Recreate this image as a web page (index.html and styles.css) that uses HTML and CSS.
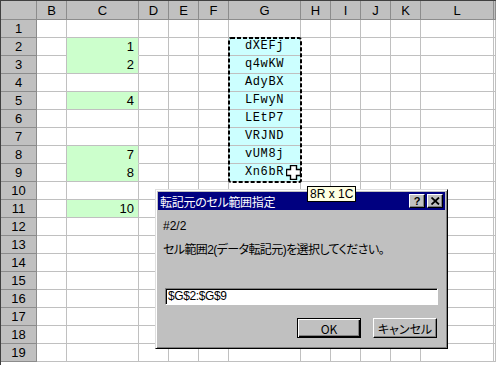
FILE: index.html
```html
<!DOCTYPE html>
<html lang="ja">
<head>
  <meta charset="UTF-8" />
  <meta name="viewport" content="width=device-width, initial-scale=1.0"/>
  <title>転記元のセル範囲指定</title>
  <link rel="stylesheet" href="styles.css">
</head>
<body>
  <div class="sheet">
    <div class="grid" id="grid"></div>

    <svg class="marquee" width="75" height="147" viewBox="0 0 75 147">
      <rect x="1" y="1" width="72" height="144" rx="2" fill="none" stroke="#000" stroke-width="2" stroke-dasharray="4 2"/>
    </svg>

    <svg class="cursor" width="15" height="15" viewBox="0 0 15 15">
      <polygon points="4.5,0.5 10.5,0.5 10.5,4.5 14.5,4.5 14.5,10.5 10.5,10.5 10.5,14.5 4.5,14.5 4.5,10.5 0.5,10.5 0.5,4.5 4.5,4.5" fill="#fff" stroke="#000" stroke-width="1.4"/>
    </svg>

    <div class="dialog">
      <div class="titlebar">
        <span class="title">転記元のセル範囲指定</span>
        <div class="title-buttons">
          <span class="tbtn">?</span>
          <span class="tbtn">
            <svg width="9" height="8" viewBox="0 0 9 8"><path d="M0.5 0.5 L8 7.5 M8 0.5 L0.5 7.5" stroke="#000" stroke-width="1.8"/></svg>
          </span>
        </div>
      </div>
      <div class="dialog-body">
        <p class="step">#2/2</p>
        <p class="prompt">セル範囲2(データ転記元)を選択してください。</p>
        <div class="refbox">$G$2:$G$9</div>
        <div class="actions">
          <button class="btn default">OK</button>
          <button class="btn">キャンセル</button>
        </div>
      </div>
    </div>

    <div class="tip">8R x 1C</div>
  </div>

  <script>
    const cols = ['B', 'C', 'D', 'E', 'F', 'G', 'H', 'I', 'J', 'K', 'L', ''];
    const nums = { 2: '1', 3: '2', 5: '4', 8: '7', 9: '8', 11: '10' };
    const codes = ['dXEFj', 'q4wKW', 'AdyBX', 'LFwyN', 'LEtP7', 'VRJND', 'vUM8j', 'Xn6bR'];

    let html = '<div class="corner"></div>';
    cols.forEach(c => { html += `<div class="colhead">${c}</div>`; });

    for (let r = 1; r <= 19; r++) {
      html += `<div class="rowhead">${r}</div>`;
      cols.forEach(c => {
        if (c === 'C' && nums[r]) {
          const joined = nums[r + 1] ? ' joined' : '';
          html += `<div class="cell num${joined}">${nums[r]}</div>`;
        } else if (c === 'G' && r >= 2 && r <= 9) {
          html += `<div class="cell code">${codes[r - 2]}</div>`;
        } else {
          html += '<div class="cell"></div>';
        }
      });
    }

    document.getElementById('grid').innerHTML = html;
  </script>
</body>
</html>
```

FILE: styles.css
```css
* {
  box-sizing: border-box;
}

body {
  margin: 0;
  background: #fff;
  overflow: hidden;
  font-family: 'Liberation Sans', 'Noto Sans CJK JP', sans-serif;
}

.sheet {
  position: relative;
  width: 496px;
  height: 365px;
  overflow: hidden;
  border-top: 1px solid #404040;
  border-left: 1px solid #404040;
}

.grid {
  display: grid;
  grid-template-columns: 36px 30px 72px 30px 30px 30px 72px 30px 30px 30px 30px 73px 2px;
  grid-template-rows: 19px repeat(19, 18px);
}

.corner,
.colhead,
.rowhead {
  background: #c0c0c0;
  border-right: 1px solid #8c8c8c;
  border-bottom: 1px solid #8c8c8c;
  font-size: 13px;
  color: #000;
  display: flex;
  align-items: center;
  justify-content: center;
}

.cell {
  border-right: 1px solid #c0c0c0;
  border-bottom: 1px solid #c0c0c0;
  font-size: 13px;
  line-height: 17px;
}

.cell.num {
  background: #ccffcc;
  text-align: right;
  padding-right: 4px;
}

.cell.num.joined {
  border-bottom-color: #ccffcc;
}

.cell.code {
  background: #ccffff;
  text-align: center;
  font-family: 'Liberation Mono', monospace;
  font-size: 12px;
  letter-spacing: 0.6px;
}

.marquee {
  position: absolute;
  left: 227px;
  top: 36px;
}

.cursor {
  position: absolute;
  left: 285px;
  top: 164px;
}

.tip {
  position: absolute;
  left: 306px;
  top: 185px;
  height: 16px;
  padding: 0 2px;
  background: #ffffe1;
  border: 1px solid #000;
  font-size: 12px;
  line-height: 14px;
}

/* dialog */

.dialog {
  position: absolute;
  left: 154px;
  top: 188px;
  width: 293px;
  height: 160px;
  padding: 2px;
  background: #c0c0c0;
  border: 1px solid;
  border-color: #dfdfdf #000 #000 #dfdfdf;
  box-shadow: inset 1px 1px #fff, inset -1px -1px #808080;
  font-size: 12px;
}

.titlebar {
  height: 18px;
  background: #000080;
  color: #fff;
  display: flex;
  align-items: center;
  justify-content: space-between;
  padding: 0 2px 0 2px;
}

.title {
  font-family: 'Noto Sans CJK JP', sans-serif;
  font-feature-settings: 'palt';
  font-size: 12px;
  letter-spacing: -0.3px;
}

.title-buttons {
  display: flex;
  gap: 2px;
}

.tbtn {
  width: 16px;
  height: 14px;
  background: #c0c0c0;
  border: 1px solid;
  border-color: #fff #000 #000 #fff;
  box-shadow: inset -1px -1px #808080;
  color: #000;
  font-weight: bold;
  font-size: 11px;
  display: flex;
  align-items: center;
  justify-content: center;
}

.dialog-body {
  padding: 0 8px 0 5px;
}

.step {
  margin: 9px 0 0;
  line-height: 14px;
}

.prompt {
  margin: 10px 0 0;
  line-height: 14px;
  font-feature-settings: 'palt';
  letter-spacing: -0.6px;
}

.refbox {
  margin: 31px 0 0 2px;
  width: 273px;
  height: 17px;
  background: #fff;
  border: 1px solid;
  border-color: #808080 #fff #fff #808080;
  box-shadow: inset 1px 1px #000;
  padding-left: 2px;
  line-height: 15px;
  font-size: 12px;
  letter-spacing: -0.4px;
}

.actions {
  display: flex;
  justify-content: flex-end;
  gap: 12px;
  margin-top: 13px;
}

.btn {
  width: 64px;
  height: 20px;
  padding: 0;
  background: #c0c0c0;
  border: 1px solid;
  border-color: #fff #000 #000 #fff;
  box-shadow: inset -1px -1px #808080;
  font-family: 'Noto Sans CJK JP', sans-serif;
  font-feature-settings: 'palt';
  font-size: 12px;
  color: #000;
}

.btn.default {
  border: 1px solid #000;
  box-shadow: inset 1px 1px #fff, inset -1px -1px #000, inset -2px -2px #808080;
}
```
